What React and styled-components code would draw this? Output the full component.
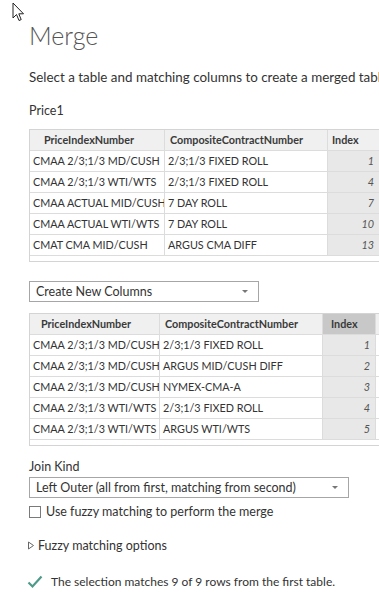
import styled, { createGlobalStyle } from "styled-components"

const GlobalStyle = createGlobalStyle`
  html, body {
    margin: 0;
    padding: 0;
    background: #ffffff;
    overflow: hidden;
  }
  body {
    font-family: Lato, "Open Sans", sans-serif;
    color: #333333;
  }
`

const Page = styled.div`
  position: relative;
  width: 379px;
  height: 606px;
  overflow: hidden;
  padding: 19px 0 0 29px;
  box-sizing: border-box;
`

const Cursor = styled.svg`
  position: absolute;
  left: 12px;
  top: 2px;
`

const Title = styled.h1`
  margin: 0;
  font-size: 25px;
  font-weight: 300;
  color: #555555;
  line-height: 32px;
`

const Subtitle = styled.p`
  margin: 17px 0 0;
  font-size: 13.4px;
  white-space: nowrap;
  line-height: 18px;
`

const Label = styled.div`
  margin-top: ${(p) => p.$top || 0}px;
  font-size: 12.5px;
  line-height: 17px;
`

const Grid = styled.div`
  margin-top: ${(p) => p.$top || 0}px;
  width: 400px;
  border: 1px solid #d4d4d4;
  border-right: none;
  padding-bottom: 5px;
  font-size: 10.8px;
`

const Row = styled.div`
  display: grid;
  grid-template-columns: ${(p) => p.$cols};
  height: 21px;
  border-bottom: 1px solid #dcdcdc;
  box-sizing: border-box;
`

const HeadCell = styled.div`
  background: ${(p) => (p.$active ? "#c8c8c8" : "#f0f0f0")};
  font-weight: 700;
  line-height: 20px;
  padding-left: ${(p) => p.$pad || 5}px;
  border-right: 1px solid #dcdcdc;
  white-space: nowrap;
  overflow: hidden;
  color: #3a3a3a;
`

const Cell = styled.div`
  background: ${(p) => (p.$index ? "#e8e8e8" : "#ffffff")};
  line-height: 20px;
  padding: 0 5px 0 3px;
  border-right: 1px solid #dcdcdc;
  white-space: nowrap;
  overflow: hidden;
  text-align: ${(p) => (p.$index ? "right" : "left")};
  font-style: ${(p) => (p.$index ? "italic" : "normal")};
  color: ${(p) => (p.$index ? "#555555" : "#333333")};
`

const Select = styled.div`
  margin-top: ${(p) => p.$top || 0}px;
  width: ${(p) => p.$width}px;
  height: 21px;
  box-sizing: border-box;
  border: 1px solid #a6a6a6;
  display: flex;
  align-items: center;
  justify-content: space-between;
  padding: 0 10px 0 6px;
  font-size: 12.5px;
`

const Caret = styled.span`
  width: 0;
  height: 0;
  border-left: 3px solid transparent;
  border-right: 3px solid transparent;
  border-top: 3px solid #777777;
`

const CheckRow = styled.label`
  margin-top: 6px;
  display: flex;
  align-items: center;
  gap: 5px;
  font-size: 12.5px;
  line-height: 16px;
`

const Box = styled.span`
  width: 10px;
  height: 10px;
  border: 1px solid #7a7a7a;
`

const Expander = styled.div`
  margin-top: 17px;
  display: flex;
  align-items: center;
  gap: 3px;
  font-size: 12.5px;
  line-height: 17px;
  margin-left: -2px;
`

const Status = styled.div`
  margin-top: 20px;
  display: flex;
  align-items: center;
  gap: 8px;
  font-size: 12px;
  line-height: 16px;
  margin-left: -2px;
`

const top = {
  cols: "135px 163px 52px 50px",
  head: [
    { t: "PriceIndexNumber", pad: 14 },
    { t: "CompositeContractNumber", pad: 5 },
    { t: "Index", pad: 4 },
    { t: "", pad: 4 },
  ],
  rows: [
    ["CMAA 2/3;1/3 MD/CUSH", "2/3;1/3 FIXED ROLL", "1"],
    ["CMAA 2/3;1/3 WTI/WTS", "2/3;1/3 FIXED ROLL", "4"],
    ["CMAA ACTUAL MID/CUSH", "7 DAY ROLL", "7"],
    ["CMAA ACTUAL WTI/WTS", "7 DAY ROLL", "10"],
    ["CMAT CMA MID/CUSH", "ARGUS CMA DIFF", "13"],
  ],
}

const bottom = {
  cols: "130px 163px 53px 54px",
  head: [
    { t: "PriceIndexNumber", pad: 11 },
    { t: "CompositeContractNumber", pad: 5 },
    { t: "Index", pad: 8, active: true },
    { t: "", pad: 4 },
  ],
  rows: [
    ["CMAA 2/3;1/3 MD/CUSH", "2/3;1/3 FIXED ROLL", "1"],
    ["CMAA 2/3;1/3 MD/CUSH", "ARGUS MID/CUSH DIFF", "2"],
    ["CMAA 2/3;1/3 MD/CUSH", "NYMEX-CMA-A", "3"],
    ["CMAA 2/3;1/3 WTI/WTS", "2/3;1/3 FIXED ROLL", "4"],
    ["CMAA 2/3;1/3 WTI/WTS", "ARGUS WTI/WTS", "5"],
  ],
}

const DataGrid = ({ data, top: mt }) => (
  <Grid $top={mt}>
    <Row $cols={data.cols}>
      {data.head.map((h, i) => (
        <HeadCell key={i} $pad={h.pad} $active={h.active}>
          {h.t}
        </HeadCell>
      ))}
    </Row>
    {data.rows.map((r, i) => (
      <Row key={i} $cols={data.cols}>
        <Cell>{r[0]}</Cell>
        <Cell>{r[1]}</Cell>
        <Cell $index>{r[2]}</Cell>
        <Cell />
      </Row>
    ))}
  </Grid>
)

export default function App() {
  return (
    <>
      <GlobalStyle />
      <Page>
        <Cursor width="13" height="20" viewBox="0 0 13 20">
          <path d="M1 1 L1 16 L4.5 12.5 L7 18.5 L9.2 17.6 L6.8 11.8 L11.5 11.8 Z" fill="#ffffff" stroke="#222222" strokeWidth="1" strokeLinejoin="round" />
        </Cursor>
        <Title>Merge</Title>
        <Subtitle>Select a table and matching columns to create a merged table.</Subtitle>
        <Label $top={16}>Price1</Label>
        <DataGrid data={top} top={10} />
        <Select $top={19} $width={230}>
          Create New Columns
          <Caret />
        </Select>
        <DataGrid data={bottom} top={11} />
        <Label $top={12}>Join Kind</Label>
        <Select $top={2} $width={320}>
          Left Outer (all from first, matching from second)
          <Caret />
        </Select>
        <CheckRow>
          <Box />
          Use fuzzy matching to perform the merge
        </CheckRow>
        <Expander>
          <svg width="8" height="9" viewBox="0 0 8 9">
            <path d="M1.5 1 L6.5 4.5 L1.5 8 Z" fill="none" stroke="#666666" strokeWidth="1" />
          </svg>
          Fuzzy matching options
        </Expander>
        <Status>
          <svg width="16" height="14" viewBox="0 0 16 14">
            <path d="M1.5 7.5 L5.5 11.5 L14.5 1.5" fill="none" stroke="#4e9a89" strokeWidth="2.2" />
          </svg>
          The selection matches 9 of 9 rows from the first table.
        </Status>
      </Page>
    </>
  )
}
